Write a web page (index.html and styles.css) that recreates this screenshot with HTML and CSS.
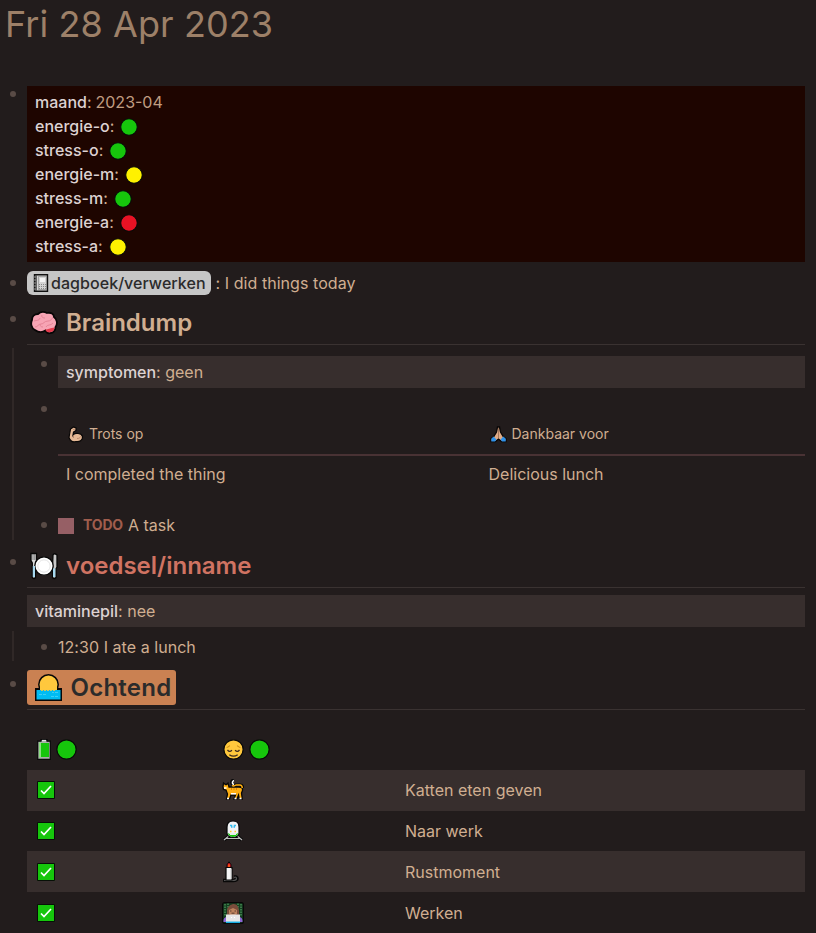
FILE: index.html
```html
<!DOCTYPE html>
<html lang="nl">
<head>
<meta charset="utf-8">
<title>Fri 28 Apr 2023</title>
<link rel="stylesheet" href="styles.css">
</head>
<body>
<svg class="defs" aria-hidden="true">
  <symbol id="dot" viewBox="0 0 20 20"><circle cx="10" cy="10" r="9.2" fill="currentColor" stroke="#080a08" stroke-width="1.2"/></symbol>
  <symbol id="check" viewBox="0 0 18 18"><path d="M.5.5h17v17H.5z" fill="#16c60c" stroke="#071007"/><path d="M4 9.5l3 3 7-7.5" fill="none" stroke="#fff" stroke-width="1.7"/></symbol>
</svg>
<main class="page">
  <h1 class="title">Fri 28 Apr 2023</h1>

  <section class="block">
    <i class="bullet"></i>
    <div class="props props-page">
      <div><b>maand</b>: <span class="date">2023-04</span></div>
      <div><b>energie-o</b>: <svg class="dot green"><use href="#dot"/></svg></div>
      <div><b>stress-o</b>: <svg class="dot green"><use href="#dot"/></svg></div>
      <div><b>energie-m</b>: <svg class="dot yellow"><use href="#dot"/></svg></div>
      <div><b>stress-m</b>: <svg class="dot green"><use href="#dot"/></svg></div>
      <div><b>energie-a</b>: <svg class="dot red"><use href="#dot"/></svg></div>
      <div><b>stress-a</b>: <svg class="dot yellow"><use href="#dot"/></svg></div>
    </div>
  </section>

  <section class="block journal">
    <i class="bullet"></i>
    <div class="line"><span class="tag"><svg class="book" viewBox="0 0 16 18"><path d="M1.500.7h13v16.600h-13z" fill="#d4d4d4" stroke="#111" stroke-width="1.400"/><path d="M2 1h1.800v16H2z" fill="#444"/><path d="M5.500 2.500h8v13h-8z" fill="none" stroke="#777" stroke-dasharray="1 1"/><path d="M7 4h5v4H7z" fill="#f4f4f4"/><path d="M6 10.500h7M6 12.500h7M6 14.500h7" stroke="#888" stroke-dasharray="1 1"/><path d="M0 3h3M0 6h3M0 9h3M0 12h3M0 15h3" stroke="#999"/></svg>dagboek/verwerken</span><span>: I did things today</span></div>
  </section>

  <section class="block heading brain">
    <i class="bullet"></i>
    <h2><svg class="big" viewBox="0 0 28 24"><path d="M5 19C1 17 .5 12 2 9c0-4 3-6 6-6 3-3 7-2 9-1 4-1 7 1 7 4 3 2 4 7 1.500 10 0 3-2 6-5 6-3 1-4-.5-5-2.500-3 2-7 2-10.500-.5z" fill="#f7a4b4" stroke="#080606" stroke-width="1.800"/><path d="M14 19c3-.5 7-2 10.500-2.500 0 3-2 4.500-4.500 4.800-2 .2-4-.8-4.500-2.300z" fill="#e43b4d"/><path d="M4 10c3-1 5 0 6-3M12 4c-1 2 1 3 3 3M5 16c3 0 3-3 6-3s3-3 7-3 3-3 5-3M16 16c1-3 5-1 7-4M10 13c0 2 1 3 3 3" fill="none" stroke="#e58496" stroke-width="1"/></svg>Braindump</h2>
  </section>

  <div class="children brain-children">
    <section class="block child symptoms">
      <i class="bullet"></i>
      <div class="props"><div><b>symptomen</b>: geen</div></div>
    </section>
    <section class="block child gratitude">
      <i class="bullet"></i>
      <table class="pair">
        <thead><tr>
          <th><svg class="small" viewBox="0 0 17 17"><path d="M2 11.500L3.500 3l3-2 2.500 1v2.500L6.500 6 6 9c2-2.500 8.500-2 9.500 1.500.5 3.500-2.500 5.500-6.500 5-3 1-6 0-7-4z" fill="#e5b895" stroke="#080606" stroke-width="1.200"/><path d="M6.500 9v3M10 12.500c2 0 3-.5 3.500-2M6 3.500l2-.3" fill="none" stroke="#a9765c" stroke-width=".7"/></svg>Trots op</th>
          <th><svg class="small" viewBox="0 0 17 17"><path d="M7.500 1h2l1 5 3 5 2.500 1.500v3h-4.500L8.500 13 5.500 15.500H1v-3L3.500 11l3-5z" fill="#dfab87" stroke="#080606" stroke-width="1.300"/><path d="M8.500 2v10" stroke="#8a6049" stroke-width=".7"/><path d="M3.500 10.500l3 3-1.500 2H1.300v-2.700zM13.500 10.500l-3 3 1.500 2h3.700v-2.700z" fill="#2f91e8"/></svg>Dankbaar voor</th>
        </tr></thead>
        <tbody><tr><td>I completed the thing</td><td>Delicious lunch</td></tr></tbody>
      </table>
    </section>
    <section class="block child task">
      <i class="bullet"></i>
      <div class="line"><i class="checkbox"></i><b class="todo">TODO</b><span class="task-text">A task</span></div>
    </section>
  </div>

  <section class="block heading food">
    <i class="bullet"></i>
    <h2><svg class="big" viewBox="0 0 28 28"><g stroke="#070707" stroke-width="1.300"><path d="M1 1.500h5.500v7L5.500 11v14.500q-1.500 2-3.200 0V11L1 8.500z" fill="#d8d8d8"/><path d="M22.500 25.500V15l.5-12q1-2.500 4 0v12l-1 2v8.500q-1.800 2-3.500 0z" fill="#c9c9c9"/><circle cx="14" cy="14" r="9.200" fill="#fff"/></g><path d="M2.800 14h2.200v11H2.800zM23 16.500h2.300V25H23z" fill="#a6d8ef"/><path d="M3 2v6M4.800 2v6" stroke="#444" stroke-width=".6"/><circle cx="14" cy="14" r="6.200" fill="#fff" stroke="#ddd" stroke-width=".8"/></svg>voedsel/inname</h2>
  </section>
  <div class="props props-food"><div><b>vitaminepil</b>: nee</div></div>
  <div class="children food-children">
    <section class="block child lunch">
      <i class="bullet"></i>
      <div class="line">12:30 I ate a lunch</div>
    </section>
  </div>

  <section class="block heading morning">
    <i class="bullet"></i>
    <h2><span class="marker"><svg class="sun" viewBox="0 0 27 27"><circle cx="13.500" cy="10.500" r="9.700" fill="#ffc83d" stroke="#080808" stroke-width="1.500"/><path d="M0 14H5V16h17v-2h5v13H0z" fill="#080808"/><path d="M5 13h17v3H5z" fill="#ffc83d"/><path d="M1.500 16h24v9.500h-24z" fill="#00bcf2"/><path d="M6 16.300h15" stroke="#ffc83d" stroke-dasharray="2 1"/><path d="M4 20.500h3m1 0h3M17 18.500h2m1 0h3M16 22.500h3m1 0h3" stroke="#58d5f7" stroke-width=".7"/></svg>Ochtend</span></h2>
  </section>

  <table class="routine">
    <tr>
      <td><span class="icons"><svg class="battery" viewBox="0 0 14 21"><path d="M.7 2.200H4V.7h6v1.500h3.300v18.100H.7z" fill="#a9b0a9" stroke="#080808" stroke-width="1.200"/><path d="M2 4h10v14H2z" fill="#16c60c"/><path d="M2 3.500h2v15H2z" fill="#8dde83"/><path d="M5 1.400h4" stroke="#eee"/></svg><svg class="dot large green"><use href="#dot"/></svg></span></td>
      <td><span class="icons face-icons"><svg class="face" viewBox="0 0 20 20"><circle cx="10" cy="10" r="9.200" fill="#ffc83d" stroke="#080808" stroke-width="1.200"/><path d="M3.500 8q1.500-.2 3-1.700M16.500 8q-1.500-.2-3-1.700" fill="none" stroke="#c98b18"/><path d="M4.300 10.300q2 3 4.200.3M11.500 10.600q2.200 2.700 4.200-.3M6 15q4 2.700 8 0" fill="none" stroke="#3c2b20" stroke-width="1.200"/></svg><svg class="dot large green"><use href="#dot"/></svg></span></td>
      <td></td>
    </tr>
    <tr>
      <td><svg class="check"><use href="#check"/></svg></td>
      <td><svg class="pic" viewBox="0 0 22 22"><path d="M12 6q-3-1-2-4 1-1 2-1M10 6.500q3 1 4-.5h4q2.700 0 2.700 3" fill="none" stroke="#080808" stroke-width="3.200"/><path d="M1.500 4l2 1.500h1L6 4l1 4h10q4 0 3.500 3.500L19.500 14l.8 6h-3l-.8-4-1.500 4h-3l1.500-4H9l-1.500 4h-3l1-5L4 11 1.500 10.500 1 8z" fill="#ffaf12" stroke="#080808" stroke-width="1.300"/><path d="M10 6.500q2 1 4-.5h4q2 0 2.300 3" fill="none" stroke="#ffaf12" stroke-width="1.500"/><path d="M12 5.500q-2-.5-1.500-2.500.5-1.300 1.500-1.500M2 9h2.500M5 19.500h2M12.500 19.500h2M17.500 19.500h2M9 14.800h5" fill="none" stroke="#fff" stroke-width="1.500"/><path d="M9.500 9v2M12 9v2M14.500 9v2" stroke="#cf7b0a" stroke-width=".8"/></svg></td>
      <td>Katten eten geven</td>
    </tr>
    <tr class="short">
      <td><svg class="check"><use href="#check"/></svg></td>
      <td><svg class="pic" viewBox="0 0 22 22"><path d="M2 20l6-5M20 20l-6-5M5 18h12" stroke="#080808" stroke-width="3.200"/><path d="M2 20l6-5M20 20l-6-5M4 18.500h14" stroke="#bcbcbc" stroke-width="1.200"/><path d="M5 7q0-6 6-6t6 6v6q0 4-6 4.500Q5 17 5 13z" fill="#f2f3f5" stroke="#080808" stroke-width="1.200"/><path d="M5.700 13q5 3.500 10.600 0-.8 3.500-5.300 4-4.500-.5-5.300-4z" fill="#16c60c"/><path d="M8 13h6v2H8z" fill="#e8eaec"/><path d="M8 5.500h2.300M11.700 5.500H14M9 7h1.500M11.500 7H13" stroke="#32bcef" stroke-width="1.500"/><path d="M8 11.500h1.500M12.500 11.500H14" stroke="#ffca28" stroke-width="1.500"/></svg></td>
      <td>Naar werk</td>
    </tr>
    <tr>
      <td><svg class="check"><use href="#check"/></svg></td>
      <td><svg class="pic" viewBox="0 0 22 22"><path d="M1 19.500h10q4 0 4-2t-3-1.500" fill="none" stroke="#080808" stroke-width="3.500"/><path d="M2 19.500h9q3.500 0 3.500-2T12 16.500" fill="none" stroke="#535353" stroke-width="1.200"/><path d="M4 6.500h6V19H4z" fill="#f5f5f5" stroke="#080808" stroke-width="1.200"/><path d="M7 .8q3 3 2 5.700H5Q4 4 7 .8z" fill="#e81224" stroke="#080808"/><path d="M7 3.500v2.500" stroke="#ff8c00"/><path d="M9 8v10" stroke="#cfcfcf"/></svg></td>
      <td>Rustmoment</td>
    </tr>
    <tr>
      <td><svg class="check"><use href="#check"/></svg></td>
      <td><svg class="pic" viewBox="0 0 22 22"><rect x=".6" y=".6" width="20.800" height="20.800" rx="2" fill="#163d20" stroke="#080808" stroke-width="1.200"/><path d="M3 2v12M6 1.500v13M16 1.500v13M19 2v12" stroke="#5bb56c" stroke-dasharray="1.500 1"/><path d="M1.500 20q-.5-5 4-5h11q4.500 0 4 5z" fill="#8d63d6"/><path d="M5 14Q4 3 11 2t6 12z" fill="#7a4c3b"/><path d="M7 8l4-2 4 2v4q-4 3.500-8 0z" fill="#bd835e"/><path d="M8 9h1.500M12.500 9H14M9.500 11.200h3" stroke="#432d24" stroke-width=".8"/><path d="M4 12.500h14V20H4z" fill="#e6e6e6"/><path d="M9 15.500h1M12 15.500h1" stroke="#fff"/><path d="M4 20.300h14" stroke="#15aee5" stroke-width="1.500"/></svg></td>
      <td>Werken</td>
    </tr>
  </table>
</main>
</body>
</html>
```
FILE: styles.css
```css
* { box-sizing: border-box; }

body {
  margin: 0;
  height: 933px;
  overflow: hidden;
  background: #221c1c;
  color: #d0ae91;
  font: 16px/24px Inter, sans-serif;
}

.defs { display: block; width: 0; height: 0; }
.page { padding: 0 11px 0 6px; }
svg { flex: none; }
b { font-weight: 500; color: #ddd2d2; }

.title {
  height: 86px;
  margin: 0 0 0 -1px;
  padding-top: 4px;
  font-size: 36px;
  line-height: 40px;
  font-weight: 400;
  letter-spacing: .08px;
  color: #9d8068;
}

.block { display: flex; align-items: flex-start; }
.bullet {
  flex: none;
  width: 6px;
  height: 6px;
  margin: 5px 11px 0 4px;
  border-radius: 50%;
  background: #594b46;
}
.line { display: flex; align-items: center; height: 24px; }

.props { flex: 1; padding: 4px 8px; background: #372e2d; }
.props-page { background: #1e0500; }
.date { margin-left: -.5px; color: #c09d82; }

.dot { width: 18px; height: 18px; margin-left: 1.5px; vertical-align: -3.5px; }
.dot.large { width: 21px; height: 21px; margin: 0; }
.green { color: #16c60c; }
.yellow { color: #fff100; }
.red { color: #e81224; }

.journal { margin-top: 9px; }
.journal .bullet { margin-top: 9px; }
.journal .line { letter-spacing: .05px; }
.tag {
  display: flex;
  align-items: center;
  height: 24px;
  margin-right: 5px;
  padding: 0 5px 0 6px;
  border-radius: 6px;
  background: #c6c6c6;
  color: #2b2b2b;
  font-weight: 500;
}
.book { width: 16px; height: 18px; margin-right: 2px; }

.heading .bullet { margin-top: 13px; }
h2 {
  flex: 1;
  display: flex;
  align-items: center;
  height: 42px;
  margin: 0;
  padding: 0 0 2px 3px;
  border-bottom: 1px solid #3a3231;
  font-size: 24px;
  line-height: 32px;
  font-weight: 600;
}
.brain { margin-top: 8px; }
.brain h2 { padding-bottom: 1px; }
.big { width: 28px; height: 28px; margin-right: 8px; }

.children { margin-left: 6px; border-left: 2px solid #302827; }
.child .bullet { margin-left: 27px; margin-top: 5px; }
.brain-children { height: 192px; margin-top: 3px; padding-top: 8px; }
.symptoms { height: 45px; }
.gratitude { height: 112px; }
.pair {
  flex: 1;
  margin-top: 13px;
  border-collapse: collapse;
  table-layout: fixed;
}
.pair th, .pair td { padding: 0 8px; text-align: left; }
.pair th {
  height: 41px;
  border-bottom: 2px solid #493234;
  font-size: 14px;
  font-weight: 400;
}
.pair td { height: 38px; padding-bottom: 2px; }
.pair th:first-child { width: 422.5px; }
.small { width: 17px; height: 17px; margin: 0 5px 0 1px; vertical-align: -4px; }
.task .bullet { margin-top: 9px; }
.checkbox { width: 16px; height: 16px; margin-top: 2px; background: #965f65; }
.todo { margin: 0 5px 0 9px; color: #a05d4d; font-size: 14px; font-weight: 700; letter-spacing: -.15px; }

.food { margin-top: 6px; }
.food h2 { color: #d07362; padding-bottom: 1px; }
.props-food { margin: 7px 0 4px 21px; }
.food-children { height: 30px; padding-top: 4px; }
.lunch .bullet { margin-top: 9px; }
.lunch .line { letter-spacing: .05px; }

.morning { margin-top: 9px; }
.morning .bullet { margin-top: 11px; }
.morning h2 { height: 40px; align-items: flex-start; padding: 0; }
.marker {
  display: flex;
  align-items: center;
  height: 35px;
  padding: 0 5px 0 8px;
  border-radius: 3px;
  background: #ca8152;
  color: #2b2b2b;
  letter-spacing: .25px;
}
.sun { width: 27px; height: 27px; margin-right: 8.5px; }

.routine {
  width: 778px;
  margin: 19px 0 0 21px;
  border-collapse: collapse;
  table-layout: fixed;
}
.routine td { height: 41px; padding: 0 8px; }
.routine td:first-child { width: 187px; padding-left: 10px; }
.routine td:nth-child(2) { width: 183px; }
.routine tr:nth-child(2) td { padding-bottom: 2px; }
.routine .short td { height: 40px; padding-bottom: 1px; }
.routine tr:nth-child(even) { background: #372e2d; }
.routine svg { display: block; }
.icons { display: flex; align-items: center; gap: 5px; }
.face-icons { padding-left: 1px; }
.battery { width: 14px; height: 21px; }
.face { width: 21px; height: 21px; }
.check { width: 18px; height: 18px; }
.pic { width: 22px; height: 22px; }
```
